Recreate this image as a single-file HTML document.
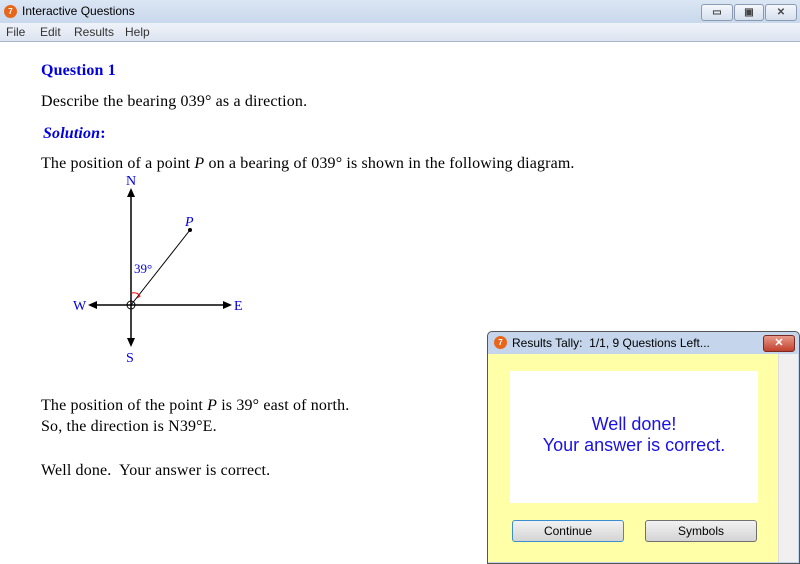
<!DOCTYPE html>
<html><head><style>
body{margin:0;width:800px;height:562px;overflow:hidden;background:#fff;position:relative;font-family:"Liberation Serif",serif;}
.title{position:absolute;left:0;top:0;width:800px;height:23px;background:linear-gradient(#dbe6f4,#c9d8ec);}
.title span{position:absolute;left:22px;top:4px;font:12px "Liberation Sans",sans-serif;color:#000;}
.ico{position:absolute;width:13px;height:13px;border-radius:50%;background:#e8661a;color:#fff;font:bold 8px "Liberation Sans";text-align:center;line-height:13px;}
.wb{position:absolute;top:4px;height:15px;border:1px solid #8a9ab0;border-radius:3px;background:linear-gradient(#f4f7fb,#d6e0ee);font:bold 10px "Liberation Sans";color:#444;text-align:center;line-height:15px;}
.menu{position:absolute;left:0;top:23px;width:800px;height:18px;background:linear-gradient(#eef2f9,#dde4f0);border-bottom:1px solid #a9b4c8;font:12px "Liberation Sans",sans-serif;color:#333;}
.menu span{position:absolute;top:2px;}
.t{position:absolute;font-size:16px;letter-spacing:0.15px;color:#000;white-space:nowrap;}
.b{color:#0000e0;font-weight:bold;}
.dlg{position:absolute;left:487px;top:331px;width:311px;height:231px;border:1px solid #555;border-radius:5px 5px 0 0;background:#c5d6ec;}
.btn{position:absolute;top:520px;width:110px;height:20px;border:1px solid #707070;border-radius:3px;background:linear-gradient(#f2f2f2,#d4d4d4);font:12px "Liberation Sans",sans-serif;text-align:center;line-height:20px;}
</style></head><body>
<div class="title"><div class="ico" style="left:4px;top:5px">7</div><span>Interactive Questions</span>
<div class="wb" style="left:701px;width:30px">▭</div><div class="wb" style="left:734px;width:28px">▣</div><div class="wb" style="left:765px;width:30px">✕</div></div>
<div class="menu"><span style="left:6px">File</span><span style="left:40px">Edit</span><span style="left:74px">Results</span><span style="left:125px">Help</span></div>
<div class="t b" style="left:41px;top:62px">Question 1</div>
<div class="t" style="left:41px;top:93px">Describe the bearing 039° as a direction.</div>
<div class="t b" style="left:43px;top:125px"><i>Solution</i>:</div>
<div class="t" style="left:41px;top:155px">The position of a point <i>P</i> on a bearing of 039° is shown in the following diagram.</div>
<svg style="position:absolute;left:0;top:0" width="480" height="380">
<g stroke="#000" stroke-width="1.5"><line x1="131" y1="192" x2="131" y2="342"/><line x1="92" y1="305" x2="227" y2="305"/></g>
<line x1="131" y1="305" x2="190" y2="230" stroke="#000"/>
<circle cx="190" cy="230" r="2" fill="#000"/>
<circle cx="131" cy="305" r="4" fill="none" stroke="#000"/>
<path d="M131 188 L127 197 L135 197Z M131 347 L127 338 L135 338Z M88 305 L97 301 L97 309Z M232 305 L223 301 L223 309Z" fill="#000"/>
<path d="M132 293 Q137 292 140 296 M137 293 L140 296 L137 298" stroke="#f00" fill="none"/>
<g fill="#0000e0" font-family="Liberation Serif" font-size="14"><text x="126" y="185">N</text><text x="126" y="362">S</text><text x="73" y="310">W</text><text x="234" y="310">E</text><text x="185" y="226" font-style="italic">P</text><text x="134" y="273" font-size="13">39°</text></g>
</svg>
<div class="t" style="left:41px;top:397px">The position of the point <i>P</i> is 39° east of north.</div>
<div class="t" style="left:41px;top:418px">So, the direction is N39°E.</div>
<div class="t" style="left:41px;top:462px">Well done.&nbsp; Your answer is correct.</div>
<div class="dlg"></div>
<div class="ico" style="left:494px;top:336px">7</div>
<div style="position:absolute;left:512px;top:336px;font:12px 'Liberation Sans',sans-serif">Results Tally:&nbsp; 1/1, 9 Questions Left...</div>
<div style="position:absolute;left:763px;top:335px;width:30px;height:15px;border:1px solid #7a2a20;border-radius:3px;background:linear-gradient(#e89a8a,#c0402c);color:#fff;font:bold 11px 'Liberation Sans';text-align:center;line-height:15px">✕</div>
<div style="position:absolute;left:488px;top:354px;width:290px;height:208px;background:#ffffa8"></div>
<div style="position:absolute;left:778px;top:354px;width:19px;height:208px;background:#f0f0f0;border-left:1px solid #ddd"></div>
<div style="position:absolute;left:510px;top:371px;width:248px;height:132px;background:#fff;color:#1a10e8;font:18px 'Liberation Sans',sans-serif;text-align:center;line-height:21px"><div style="padding-top:43px">Well done!<br>Your answer is correct.</div></div>
<div class="btn" style="left:512px;border-color:#3a8ecf">Continue</div>
<div class="btn" style="left:645px">Symbols</div>
</body></html>
